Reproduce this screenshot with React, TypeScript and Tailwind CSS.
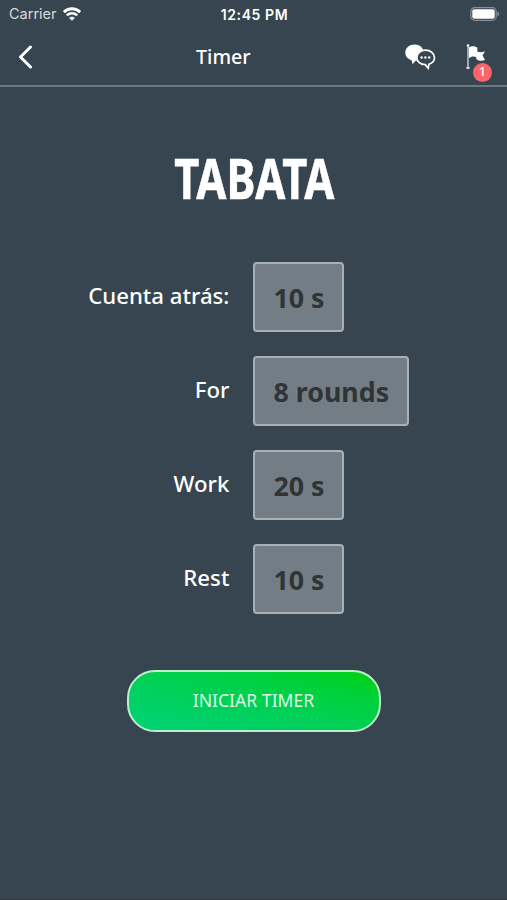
const WifiIcon = () => (
  <svg width="18" height="14" viewBox="0 0 18 14" fill="none" stroke="white">
    <path d="M0.9 5.1a11.6 11.6 0 0 1 16.2 0" strokeWidth="2.9" />
    <path d="M3.8 8.3a7.4 7.4 0 0 1 10.4 0" strokeWidth="2.5" />
    <path d="M9 13.8 6.1 11a3.9 3.9 0 0 1 5.8 0Z" fill="white" stroke="none" />
  </svg>
);

const BatteryIcon = () => (
  <svg width="30" height="14" viewBox="0 0 30 14">
    <rect x="0.8" y="0.7" width="25.4" height="12.6" rx="3.8" fill="none" stroke="#87919a" strokeWidth="1.2" />
    <rect x="2.3" y="2.2" width="22.4" height="9.6" rx="2" fill="white" />
    <path d="M27.4 4.6c2.4.9 2.4 3.9 0 4.8Z" fill="#87919a" />
  </svg>
);

const ChatIcon = () => (
  <svg width="32" height="26" viewBox="0 0 32 26">
    <path
      d="M9.5.5C14.5.5 18.5 3.6 18.5 8.2S14.5 16.5 10.6 16.8L7.6 20.3 6.6 16.2C3 15 .3 12.4.3 8.7.3 3.8 4.5.5 9.5.5Z"
      fill="white"
    />
    <path
      d="M20.5 6.2c5 0 9 3.1 9 7.4 0 3.3-2.3 5.7-5.6 6.7l-.7 3.9-2.9-3.5c-4.8-.1-8.5-3-8.5-7.100 0-4.200 3.700-7.400 8.700-7.400Z"
      fill="#36454f"
      stroke="white"
      strokeWidth="1.7"
    />
    <circle cx="16.6" cy="13.5" r="1.2" fill="white" />
    <circle cx="20.4" cy="13.5" r="1.2" fill="white" />
    <circle cx="24.2" cy="13.5" r="1.2" fill="white" />
  </svg>
);

const FlagIcon = () => (
  <svg width="20" height="26" viewBox="0 0 20 26">
    <path d="M2 1.5V24" stroke="#b9c0c6" strokeWidth="1.6" />
    <circle cx="2" cy="1.5" r="1.3" fill="white" />
    <path d="M.4 24h3.2" stroke="white" strokeWidth="1.5" />
    <path
      d="M3 3.2c3-1.400 6.500-1.100 8.300.6v3.600c2.400 1.200 5 .8 7.700-.2l-2.500 4.400 2.500 4.400c-3 1.200-6.800 1.200-8.800-1.200v-1.700C8 12 5.300 12.100 3 14Z"
      fill="white"
    />
  </svg>
);

const settings = [
  { label: "Cuenta atrás:", value: "10 s" },
  { label: "For", value: "8 rounds" },
  { label: "Work", value: "20 s" },
  { label: "Rest", value: "10 s" },
];

const App = () => {
  return (
    <div className="flex h-screen flex-col border-b border-[#303b46] bg-[#36454f] font-['Noto_Sans',sans-serif] text-white">
      <div className="grid h-7 grid-cols-3 items-center pr-[7px] pl-[9px] font-['Inter',sans-serif] text-[14.5px]">
        <div className="flex items-center gap-1.5 pb-px text-[#d5dadd]">
          <span>Carrier</span>
          <WifiIcon />
        </div>
        <p className="text-center text-[14px] font-semibold tracking-[0.6px] whitespace-nowrap">12:45 PM</p>
        <div className="flex justify-end pb-px">
          <BatteryIcon />
        </div>
      </div>

      <header className="flex h-[59px] items-center border-b-2 border-[#6d7881] pr-[16px] pl-[18px]">
        <button className="w-[178px]" aria-label="Back">
          <svg width="15" height="24" viewBox="0 0 15 24" fill="none" stroke="white" strokeWidth="3" strokeLinecap="round" strokeLinejoin="round">
            <path d="M12.5 2 2.5 12l10 10" />
          </svg>
        </button>
        <h2 className="grow text-[19.7px] font-medium">Timer</h2>
        <div className="flex items-center gap-[29px]">
          <ChatIcon />
          <div className="w-[25px]">
            <div className="relative">
              <FlagIcon />
              <span className="absolute top-[19px] left-[7px] flex size-[19px] items-center justify-center rounded-full bg-[#fb6468] text-[12px] leading-none font-medium">
                1
              </span>
            </div>
          </div>
        </div>
      </header>

      <main className="flex flex-col items-center">
        <h1 className="mt-[63px] ml-px scale-x-[0.79] text-[55px] leading-[56px] font-bold [-webkit-text-stroke:0.6px_white]">
          TABATA
        </h1>

        <div className="mt-[56px] flex w-full flex-col gap-6">
          {settings.map((item) => (
            <div key={item.label} className="flex h-[70px] items-center gap-6">
              <p className="w-[229.4px] pb-[3px] text-right text-[22.2px] font-medium">{item.label}</p>
              <div className="flex h-full items-center rounded-[4px] border-2 border-[#a7b0b6] bg-[#737d85] px-[18px] pt-0.5 text-[26.8px] font-bold text-[#303435]">
                {item.value}
              </div>
            </div>
          ))}
        </div>

        <button className="mt-[56px] h-[62px] w-[254px] rounded-[28px] border-2 border-[#bdeecb] bg-linear-to-tr from-[#00d178] to-[#00d000] pb-0.5 text-[17.6px] text-[#dcfbe5]">
          INICIAR TIMER
        </button>
      </main>
    </div>
  );
};

export default App;
